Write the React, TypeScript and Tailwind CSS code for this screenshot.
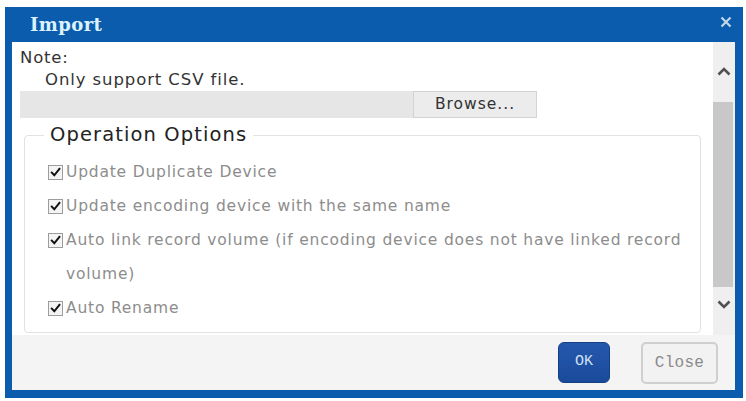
import React from "react";

const sans = { fontFamily: '"DejaVu Sans", Verdana, sans-serif' };

function CheckBox() {
  return (
    <span className="inline-flex h-[15px] w-[15px] shrink-0 items-center justify-center border border-[#9c9c9c] bg-[#f4f4f4] align-middle">
      <svg width="11" height="11" viewBox="0 0 11 11">
        <path d="M1.8 5.6 L4.3 8.3 L9.4 1.8" fill="none" stroke="#111" strokeWidth="2" strokeLinecap="square" />
      </svg>
    </span>
  );
}

function Option({ children }: { children: React.ReactNode }) {
  return (
    <div className="flex items-start gap-[3px]">
      <span className="flex h-[34px] items-center pt-[1px]">
        <CheckBox />
      </span>
      <span className="text-[15.5px] leading-[34px] tracking-[0.8px] text-[#8d8d8d]">{children}</span>
    </div>
  );
}

function Chevron({ up }: { up?: boolean }) {
  return (
    <svg width="14" height="9" viewBox="0 0 14 9">
      <polyline
        points={up ? "1.5,7.5 7,2 12.5,7.5" : "1.5,1.5 7,7 12.5,1.5"}
        fill="none"
        stroke="#505050"
        strokeWidth="2.6"
      />
    </svg>
  );
}

export default function App() {
  return (
    <div className="h-[401px] w-[746px] bg-white pl-[5px] pt-[7px]" style={sans}>
      <div className="flex h-[391px] w-[738px] flex-col bg-[#0b5cad]">
        {/* title bar */}
        <div className="flex h-[35px] shrink-0 items-center justify-between pl-[25px] pr-[11px]">
          <span
            className="text-[18px] font-bold tracking-[0.4px] text-[#dcf2ff]"
            style={{ fontFamily: '"DejaVu Serif", "Liberation Serif", serif' }}
          >
            Import
          </span>
          <svg width="12" height="12" viewBox="0 0 12 12" className="-mt-[5px]">
            <path d="M1.5 1.5 L10.5 10.5 M10.5 1.5 L1.5 10.5" stroke="#c3d6ea" strokeWidth="2.2" />
          </svg>
        </div>

        {/* body */}
        <div className="ml-[7px] mr-[8px] flex h-[348px] flex-col">
          <div className="flex h-[293px]">
            <div className="flex-1 bg-white pl-[8px] pt-[5px]">
              <div className="text-[16.5px] leading-[22px] tracking-[0.8px] text-[#333]">Note:</div>
              <div className="pl-[25px] text-[16.5px] leading-[22px] tracking-[0.9px] text-[#333]">
                Only support CSV file.
              </div>
              <div className="flex h-[27px] w-[517px]">
                <div className="flex-1 bg-[#e6e6e6]" />
                <div className="flex w-[124px] items-center justify-center border border-[#d3d3d3] bg-[#ececec] text-[15.5px] tracking-[1px] text-[#333]">
                  Browse...
                </div>
              </div>
              <fieldset className="ml-[4px] mr-[12px] mt-[5px] rounded-[4px] border border-[#e2e2e2] pb-[7px] pl-[19px]">
                <legend className="px-[6px] text-[19.5px] leading-[24px] tracking-[1.1px] text-[#222]">
                  Operation Options
                </legend>
                <div className="ml-[4px] mt-[8px]">
                  <Option>Update Duplicate Device</Option>
                  <Option>Update encoding device with the same name</Option>
                  <Option>
                    Auto link record volume (if encoding device does not have linked record
                    <br />
                    volume)
                  </Option>
                  <Option>Auto Rename</Option>
                </div>
              </fieldset>
            </div>

            {/* scrollbar */}
            <div className="flex w-[22px] flex-col items-center bg-[#efefef] pt-[25px]">
              <Chevron up />
              <div className="mt-[26px] h-[185px] w-[20px] self-start bg-[#c8c8c8]" />
              <div className="mt-[13px]">
                <Chevron />
              </div>
            </div>
          </div>

          {/* footer */}
          <div
            className="flex h-[55px] items-center justify-end gap-[31px] bg-[#f4f4f4] pr-[17px]"
            style={{ fontFamily: '"Liberation Mono", "Courier New", monospace' }}
          >
            <button className="flex h-[41px] w-[52px] items-center justify-center rounded-[6px] border border-[#163f86] bg-gradient-to-b from-[#2558ad] to-[#1a4a9a] text-[15px] text-[#cfe0f6]">
              OK
            </button>
            <button className="flex h-[42px] w-[77px] items-center justify-center rounded-[5px] border-2 border-[#cfcfcf] bg-[#f2f2f2] text-[16px] tracking-[0.3px] text-[#8a8a8a]">
              Close
            </button>
          </div>
        </div>
      </div>
    </div>
  );
}
